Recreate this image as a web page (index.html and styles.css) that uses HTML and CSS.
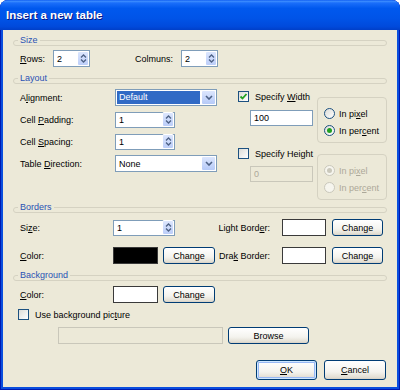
FILE: index.html
```html
<!DOCTYPE html>
<html lang="en">
<head>
    <meta charset="UTF-8">
    <meta name="viewport" content="width=device-width, initial-scale=1.0">
    <title>Insert a new table</title>
    <link rel="stylesheet" href="styles.css">
</head>
<body>
<div class="window">
    <div class="titlebar">Insert a new table</div>

    <div class="client">
        <!-- Size -->
        <div class="group"><span class="legend">Size</span></div>
        <div class="size-row">
            <span class="lbl rows-lbl"><u>R</u>ows:</span>
            <div class="field num-small">
                <span class="val">2</span>
                <span class="spin"><svg width="7" height="11" viewBox="0 0 7 11"><path d="M1 4.5 L3.5 2 L6 4.5 M1 6.5 L3.5 9 L6 6.5" fill="none" stroke="#4D6185" stroke-width="1.3"/></svg></span>
            </div>
            <span class="lbl cols-lbl">Colmuns:</span>
            <div class="field num-small">
                <span class="val">2</span>
                <span class="spin"><svg width="7" height="11" viewBox="0 0 7 11"><path d="M1 4.5 L3.5 2 L6 4.5 M1 6.5 L3.5 9 L6 6.5" fill="none" stroke="#4D6185" stroke-width="1.3"/></svg></span>
            </div>
        </div>

        <!-- Layout -->
        <div class="group layout-group"><span class="legend">Layout</span></div>
        <div class="layout">
            <div class="layout-left">
                <span class="lbl">A<u>l</u>ignment:</span>
                <div class="field select">
                    <span class="val hl">Default</span>
                    <span class="drop"><svg width="8" height="5" viewBox="0 0 8 5"><path d="M1 1 L4 4 L7 1" fill="none" stroke="#4D6185" stroke-width="1.6"/></svg></span>
                </div>

                <span class="lbl">Cell <u>P</u>adding:</span>
                <div class="field num">
                    <span class="val">1</span>
                    <span class="spin"><svg width="7" height="11" viewBox="0 0 7 11"><path d="M1 4.5 L3.5 2 L6 4.5 M1 6.5 L3.5 9 L6 6.5" fill="none" stroke="#4D6185" stroke-width="1.3"/></svg></span>
                </div>

                <span class="lbl">Cell <u>S</u>pacing:</span>
                <div class="field num">
                    <span class="val">1</span>
                    <span class="spin"><svg width="7" height="11" viewBox="0 0 7 11"><path d="M1 4.5 L3.5 2 L6 4.5 M1 6.5 L3.5 9 L6 6.5" fill="none" stroke="#4D6185" stroke-width="1.3"/></svg></span>
                </div>

                <span class="lbl">Table <u>D</u>irection:</span>
                <div class="field select">
                    <span class="val">None</span>
                    <span class="drop"><svg width="8" height="5" viewBox="0 0 8 5"><path d="M1 1 L4 4 L7 1" fill="none" stroke="#4D6185" stroke-width="1.6"/></svg></span>
                </div>
            </div>

            <div class="layout-right">
                <div class="opt-block">
                    <div class="opt-left">
                        <div class="check-row">
                            <span class="checkbox"><svg width="9" height="9" viewBox="0 0 9 9"><path d="M1.5 4.5 L3.5 6.5 L7.5 2" fill="none" stroke="#21A121" stroke-width="1.8"/></svg></span>
                            <span>Specify <u>W</u>idth</span>
                        </div>
                        <div class="field size-field"><span class="val">100</span></div>
                    </div>
                    <div class="radio-box">
                        <div class="radio-row"><span class="radio"></span><span>In pi<u>x</u>el</span></div>
                        <div class="radio-row"><span class="radio on"></span><span>In per<u>c</u>ent</span></div>
                    </div>
                </div>

                <div class="opt-block">
                    <div class="opt-left">
                        <div class="check-row">
                            <span class="checkbox"></span>
                            <span>Specify Hei<u>g</u>ht</span>
                        </div>
                        <div class="field size-field disabled second"><span class="val">0</span></div>
                    </div>
                    <div class="radio-box">
                        <div class="radio-row dis"><span class="radio on"></span><span>In pi<u>x</u>el</span></div>
                        <div class="radio-row dis"><span class="radio"></span><span>In per<u>c</u>ent</span></div>
                    </div>
                </div>
            </div>
        </div>

        <!-- Borders -->
        <div class="group borders-group"><span class="legend">Borders</span></div>
        <div class="borders">
            <div class="brow">
                <span class="lbl blbl">Si<u>z</u>e:</span>
                <div class="ctl">
                    <div class="field border-size">
                        <span class="val">1</span>
                        <span class="spin"><svg width="7" height="11" viewBox="0 0 7 11"><path d="M1 4.5 L3.5 2 L6 4.5 M1 6.5 L3.5 9 L6 6.5" fill="none" stroke="#4D6185" stroke-width="1.3"/></svg></span>
                    </div>
                </div>
                <span class="rlbl">Light Bord<u>e</u>r:</span>
                <span class="swatch small"></span>
                <span class="btn change-r">Change</span>
            </div>
            <div class="brow gap">
                <span class="lbl blbl"><u>C</u>olor:</span>
                <div class="ctl">
                    <span class="swatch black"></span>
                    <span class="btn change">Change</span>
                </div>
                <span class="rlbl">Dra<u>k</u> Border:</span>
                <span class="swatch small"></span>
                <span class="btn change-r">Change</span>
            </div>
        </div>

        <!-- Background -->
        <div class="group bg-group"><span class="legend">Background</span></div>
        <div class="background">
            <div class="brow">
                <span class="lbl blbl"><u>C</u>olor:</span>
                <div class="ctl">
                    <span class="swatch"></span>
                    <span class="btn change">Change</span>
                </div>
            </div>
            <div class="check-row pic-check">
                <span class="checkbox"></span>
                <span>Use background pic<u>t</u>ure</span>
            </div>
            <div class="pic-row">
                <div class="field disabled pic-field"></div>
                <span class="btn browse">Browse</span>
            </div>
        </div>

        <div class="actions">
            <span class="btn default ok-btn"><u>O</u>K</span>
            <span class="btn cancel-btn"><u>C</u>ancel</span>
        </div>
    </div>
</div>
</body>
</html>
```

FILE: styles.css
```css
* {
    box-sizing: border-box;
}
body {
    margin: 0;
    font-family: "Liberation Sans", Arial, sans-serif;
    font-size: 9px;
    color: #000;
}
u {
    text-decoration-thickness: 1px;
    text-underline-offset: 1px;
}
.window {
    width: 400px;
    height: 390px;
    display: flex;
    flex-direction: column;
    background: #0A4EDE;
    border-radius: 8px 8px 0 0;
    box-shadow: inset 1px 0 #0019B0, inset -1px 0 #0019B0, inset 0 -1px #0019B0;
}
.titlebar {
    height: 30px;
    flex-shrink: 0;
    display: flex;
    align-items: center;
    padding-left: 6px;
    color: #fff;
    font-weight: bold;
    font-size: 11.5px;
    text-shadow: 1px 1px #0A1883;
    border-radius: 8px 8px 0 0;
    background: linear-gradient(to bottom, #0A58F0 0%, #3D8DFF 4%, #1A6EFA 10%, #0058EE 28%, #0054E8 60%, #004ADC 88%, #003FC8 100%);
}
.client {
    flex: 1;
    margin: 0 3px 3px;
    padding: 10px 10px 0;
    background: #ECE9D8;
}

/* group header lines */
.group {
    position: relative;
    height: 6px;
    border: 1px solid #D5D2C2;
    border-radius: 3px;
}
.legend {
    position: absolute;
    left: 4px;
    top: -6px;
    padding: 0 2px;
    line-height: 10px;
    color: #2A52B4;
    background: #ECE9D8;
}
.layout-group {
    margin-top: 11px;
}
.borders-group {
    margin-top: 7px;
}
.bg-group {
    margin-top: 11px;
}

/* controls */
.lbl {
    white-space: nowrap;
}
.field {
    height: 17px;
    display: flex;
    align-items: center;
    border: 1px solid #7F9DB9;
    background: #fff;
    padding-left: 3px;
}
.field .val {
    flex: 1;
}
.field.disabled {
    border-color: #C9C7BA;
    background: #ECE9D8;
    color: #ACA899;
}
.spin {
    width: 12px;
    height: 15px;
    display: flex;
    align-items: center;
    justify-content: center;
    border: 1px solid #fff;
    border-radius: 2px;
    background: linear-gradient(to bottom, #DCE6FD, #BCCEF9);
}
.drop {
    width: 15px;
    height: 15px;
    display: flex;
    align-items: center;
    justify-content: center;
    border: 1px solid #fff;
    border-radius: 2px;
    background: linear-gradient(to bottom, #DCE6FD, #B6CAF8);
}
.select {
    padding-left: 1px;
}
.select .val {
    padding-left: 2px;
}
.select .val.hl {
    height: 13px;
    line-height: 13px;
    margin-right: 1px;
    background: #316AC5;
    color: #fff;
}
.checkbox {
    width: 11px;
    height: 11px;
    flex-shrink: 0;
    display: flex;
    align-items: center;
    justify-content: center;
    border: 1px solid #1C5180;
    background: linear-gradient(135deg, #DCDCD7, #FFFFFF);
}
.radio {
    width: 11px;
    height: 11px;
    flex-shrink: 0;
    display: flex;
    align-items: center;
    justify-content: center;
    border: 1px solid #1C5180;
    border-radius: 50%;
    background: linear-gradient(135deg, #DCDCD7, #FFFFFF);
}
.radio.on::after {
    content: "";
    width: 5px;
    height: 5px;
    border-radius: 50%;
    background: #21A121;
}
.dis {
    color: #ACA899;
}
.dis .radio {
    border-color: #CAC8BB;
    background: #F6F5EE;
}
.dis .radio.on::after {
    background: #CAC8BB;
}
.btn {
    height: 17px;
    display: flex;
    align-items: center;
    justify-content: center;
    border: 1px solid #003C74;
    border-radius: 3px;
    background: linear-gradient(to bottom, #FFFFFF 0%, #F4F3EE 60%, #E3DFD4 90%, #D6D0C5 100%);
}
.btn.default {
    box-shadow: inset 0 0 0 1px #CEE7FF, inset 0 0 0 2px #98B8F5;
}
.swatch {
    width: 45px;
    height: 17px;
    border: 1px solid #3A3A3A;
    background: #fff;
}
.swatch.black {
    background: #000;
}
.swatch.small {
    width: 44px;
}

/* size section */
.size-row {
    height: 17px;
    margin-top: 4px;
    padding-left: 7px;
    display: flex;
    align-items: center;
}
.rows-lbl {
    width: 33px;
}
.cols-lbl {
    width: 46px;
    margin-left: 45px;
}
.num-small {
    width: 37px;
}

/* layout section */
.layout {
    display: flex;
    margin-top: 5px;
}
.layout-left {
    width: 225px;
    padding-left: 7px;
    align-self: flex-start;
    display: grid;
    grid-template-columns: 95px 102px;
    grid-auto-rows: 17px;
    row-gap: 5px;
    align-items: center;
}
.layout-left .num {
    width: 60px;
    height: 16px;
}
.layout-right {
    width: 149px;
    margin-top: 2px;
}
.opt-block {
    display: flex;
}
.opt-block + .opt-block {
    margin-top: 5px;
}
.opt-left {
    width: 79px;
}
.check-row {
    height: 11px;
    display: flex;
    align-items: center;
    gap: 6px;
}
.size-field {
    width: 63px;
    height: 16px;
    margin: 8px 0 0 12px;
}
.size-field.second {
    margin-top: 7px;
}
.radio-box {
    width: 70px;
    height: 46px;
    margin-top: 6px;
    padding: 9px 0 0 6px;
    border: 1px solid #D5D2C2;
    border-radius: 4px;
    display: flex;
    flex-direction: column;
    gap: 4px;
}
.radio-row {
    height: 13px;
    display: flex;
    align-items: center;
    gap: 4px;
}

/* borders + background */
.borders {
    margin-top: 6px;
    padding: 0 4px 0 7px;
}
.background {
    margin-top: 5px;
    padding: 0 4px 0 7px;
}
.brow {
    height: 17px;
    display: flex;
    align-items: center;
}
.brow.gap {
    margin-top: 11px;
}
.blbl {
    width: 93px;
}
.ctl {
    width: 102px;
    display: flex;
    gap: 5px;
}
.border-size {
    width: 62px;
    height: 16px;
}
.change {
    width: 52px;
}
.rlbl {
    flex: 1;
    text-align: right;
    margin-right: 12px;
}
.change-r {
    width: 51px;
    margin-left: 6px;
}
.pic-check {
    margin: 6px 0 0 -2px;
}
.pic-row {
    display: flex;
    gap: 5px;
    margin-top: 7px;
    padding-left: 38px;
}
.pic-field {
    width: 165px;
}
.browse {
    width: 81px;
}

/* dialog buttons */
.actions {
    display: flex;
    justify-content: flex-end;
    gap: 7px;
    margin-top: 16px;
    padding-right: 1px;
}
.ok-btn {
    width: 61px;
    height: 20px;
}
.cancel-btn {
    width: 62px;
    height: 20px;
}
```
